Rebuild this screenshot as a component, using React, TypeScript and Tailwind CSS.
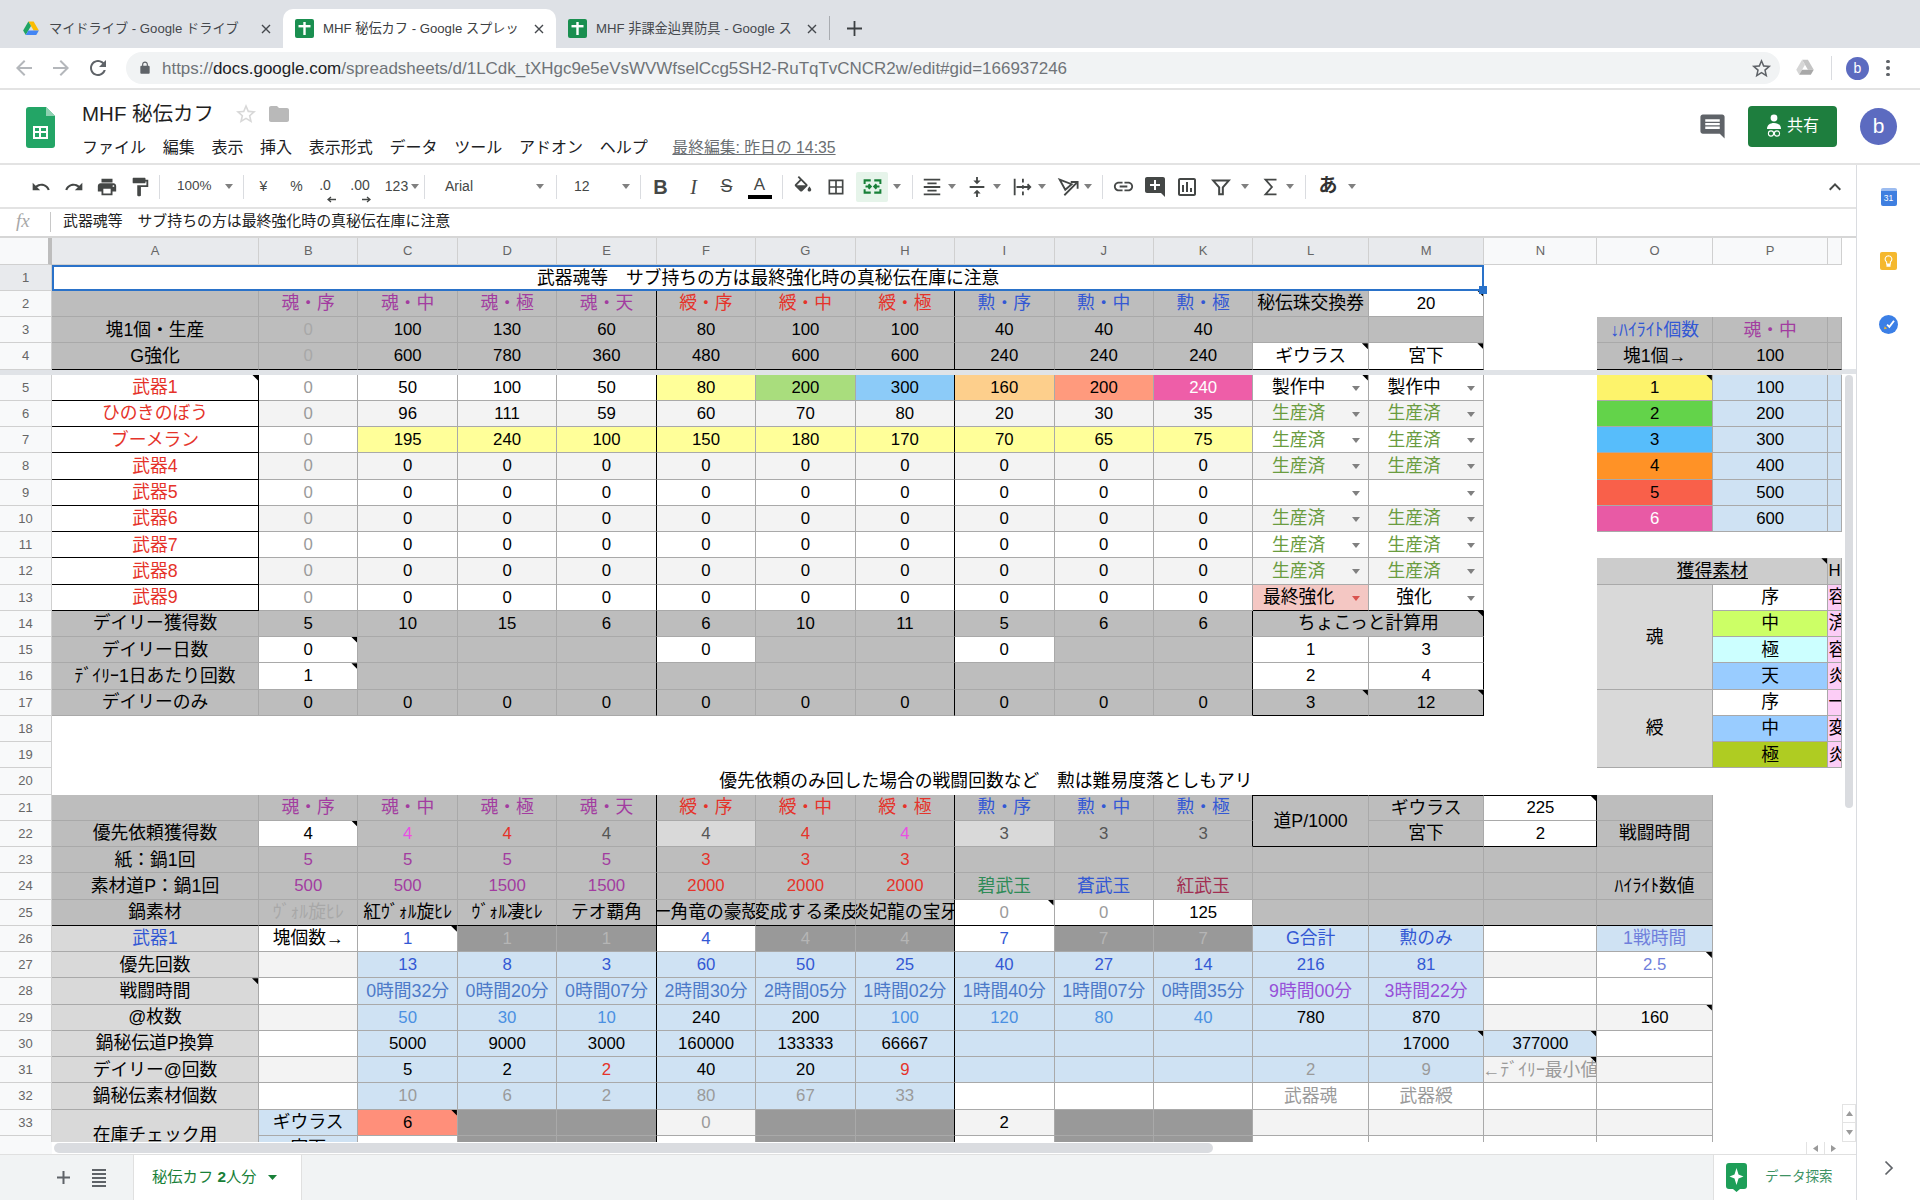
import React from 'react';

type Cd = { t?: string; bg?: string; fg?: string; x?: string; n?: boolean; dd?: boolean; nb?: boolean; l?: boolean; handle?: boolean; ddRed?: boolean };

const W = 'bg-white';
const ALT = 'bg-[#f3f3f3]';
const G = 'bg-[#bdbdbd]';
const LG = 'bg-[#d9d9d9]';
const DG = 'bg-[#999999]';
const LB = 'bg-[#cfe2f3]';
const Y = 'bg-[#ffff99]';
const BL = 'text-black';
const FAINT = 'text-[#a8a8a8]';
const DIM = 'text-[#9a9a9a]';
const RED = 'text-[#e5332a]';
const PUR = 'text-[#a23ca0]';
const BLU = 'text-[#3358d4]';
const MAG = 'text-[#e94fe3]';
const DK = 'text-[#555555]';
const STEEL = 'text-[#4c79c8]';
const SKY = 'text-[#4a90e2]';
const VIO = 'text-[#9650d8]';
const PERI = 'text-[#6f7fdc]';
const GRN = 'text-[#6a9c3f]';
const BB = 'border-b-black';
const BR = 'border-r-black';

const c = (t?: string, bg: string = W, fg: string = BL, x: string = '', o: Partial<Cd> = {}): Cd => ({ t, bg, fg, x, ...o });
const nb: Cd = { bg: W, nb: true };
const blanks = (k: number): Cd[] => Array.from({ length: k }, () => nb);
const list = (a: string[], bg: string, fg: string = BL, x: string = ''): Cd[] => a.map((t) => c(t, bg, fg, x));
const rep = (k: number, bg: string): Cd[] => Array.from({ length: k }, () => c(undefined, bg));
const note = (t: string | undefined, bg: string = W, fg: string = BL, x: string = ''): Cd => c(t, bg, fg, x, { n: true });
const done = (bg: string): Cd => c('生産済', bg, GRN, '', { dd: true });
const ddEmpty: Cd = c(undefined, W, BL, '', { dd: true });

const zeros = (bg: string): Cd[] => list(['0', '0', '0', '0', '0', '0', '0', '0', '0'], bg);
const wpn = (name: string, bg: string, vals?: Cd[]): Cd[] => [
  c(name, W, RED, `${BR} ${BB}`),
  c('0', bg, DIM),
  ...(vals ?? zeros(bg)),
];

const topRows: { n: number; cells: Cd[]; hi?: boolean }[] = [
  {
    n: 1,
    hi: true,
    cells: [
      { t: '武器魂等　サブ持ちの方は最終強化時の真秘伝在庫に注意', bg: W, fg: BL, nb: true, handle: true, x: 'col-span-13 border-2 border-[#2a72c9]' },
      nb, nb, nb, nb,
    ],
  },
  {
    n: 2,
    cells: [
      c(undefined, G),
      ...list(['魂・序', '魂・中', '魂・極', '魂・天'], G, PUR),
      ...list(['綬・序', '綬・中', '綬・極'], G, RED),
      ...list(['勲・序', '勲・中', '勲・極'], G, BLU),
      c('秘伝珠交換券', G),
      note('20'),
      nb, nb, nb, nb,
    ],
  },
  {
    n: 3,
    cells: [
      c('塊1個・生産', G),
      c('0', G, FAINT),
      ...list(['100', '130', '60', '80', '100', '100', '40', '40', '40'], G),
      c(undefined, G),
      c(undefined, G),
      nb,
      c('↓ﾊｲﾗｲﾄ個数', G, BLU),
      c('魂・中', G, PUR),
      c(undefined, G),
    ],
  },
  {
    n: 4,
    cells: [
      c('G強化', G, BL, BB),
      c('0', G, FAINT, BB),
      ...list(['600', '780', '360', '480', '600', '600', '240', '240', '240'], G, BL, BB),
      note('ギウラス', W, BL, BB),
      note('宮下', W, BL, BB),
      nb,
      c('塊1個→', G, BL, BB),
      c('100', G, BL, BB),
      c(undefined, G, BL, BB),
    ],
  },
];

const hl = (t: string, bg: string, p: string, fg: string = BL, n: boolean = false): Cd[] => [
  nb,
  c(t, bg, fg, '', { n }),
  c(p, LB),
  c(undefined, LB),
];
const Q = 'bg-[#fccdf6]';
const qc = (t: string): Cd => c(t, Q, BL, '', { l: true });
const HD = 'bg-[#cccccc]';
const A2 = 'bg-[#d9d9d9]';

const kR = `${BR}`;
const bottomRows: { n: number; cells: Cd[]; start?: number; bars?: boolean }[] = [
  {
    n: 5,
    cells: [
      { ...c('武器1', W, RED, `${BR} ${BB}`), n: true },
      c('0', W, DIM),
      c('50'), c('100'), c('50'),
      c('80', Y),
      c('200', 'bg-[#a9dd7d]'),
      c('300', 'bg-[#8ccbf8]'),
      c('160', 'bg-[#fdcf8c]'),
      c('200', 'bg-[#ff9a7d]'),
      c('240', 'bg-[#ee5ea8]', 'text-white'),
      c('製作中', W, BL, '', { dd: true, n: true }),
      c('製作中', W, BL, '', { dd: true }),
      ...hl('1', 'bg-[#fdf36b]', '100', BL, true),
    ],
  },
  { n: 6, cells: [...wpn('ひのきのぼう', ALT, list(['96', '111', '59', '60', '70', '80', '20', '30', '35'], ALT)), done(ALT), done(ALT), ...hl('2', 'bg-[#63d34a]', '200')] },
  { n: 7, cells: [...[c('ブーメラン', W, RED, `${BR} ${BB}`), c('0', W, DIM)], ...list(['195', '240', '100', '150', '180', '170', '70', '65', '75'], Y), done(W), done(W), ...hl('3', 'bg-[#57bdfb]', '300')] },
  { n: 8, cells: [...wpn('武器4', ALT), done(ALT), done(ALT), ...hl('4', 'bg-[#ff9226]', '400')] },
  { n: 9, cells: [...wpn('武器5', W), ddEmpty, ddEmpty, ...hl('5', 'bg-[#f9604a]', '500')] },
  { n: 10, cells: [...wpn('武器6', ALT), done(ALT), done(ALT), ...hl('6', 'bg-[#e85aa5]', '600', 'text-white')] },
  { n: 11, cells: [...wpn('武器7', W), done(W), done(W), ...blanks(4)] },
  {
    n: 12,
    cells: [
      ...wpn('武器8', ALT), done(ALT), done(ALT), nb,
      note('獲得素材', HD, `${BL} underline`, 'col-span-2'),
      c('HC', HD, BL, '', { l: true }),
    ],
  },
  {
    n: 13,
    cells: [
      ...wpn('武器9', W),
      c('最終強化', 'bg-[#f4c7c3]', BL, BB, { dd: true, ddRed: true }),
      c('強化', W, BL, BB, { dd: true }),
      nb,
      c('魂', A2, BL, 'row-span-4'),
      c('序'),
      qc('容'),
    ],
  },
  {
    n: 14,
    cells: [
      c('デイリー獲得数', G),
      ...list(['5', '10', '15', '6', '6', '10', '11', '5', '6'], G),
      c('6', G, BL, kR),
      note('ちょこっと計算用', G, BL, `col-span-2 ${BR}`),
      nb,
      c('中', 'bg-[#ccff66]'),
      qc('済'),
    ],
  },
  {
    n: 15,
    cells: [
      c('デイリー日数', G),
      note('0'),
      ...rep(3, G), c('0'), ...rep(2, G), c('0'), c(undefined, G), c(undefined, G, BL, kR),
      c('1'), c('3', W, BL, BR),
      nb,
      c('極', 'bg-[#ccffff]'),
      qc('容'),
    ],
  },
  {
    n: 16,
    cells: [
      c('ﾃﾞｲﾘｰ1日あたり回数', G),
      note('1'),
      ...rep(8, G), c(undefined, G, BL, kR),
      c('2'), c('4', W, BL, BR),
      nb,
      c('天', 'bg-[#99ccff]'),
      qc('炎'),
    ],
  },
  {
    n: 17,
    cells: [
      c('デイリーのみ', G),
      ...list(['0', '0', '0', '0', '0', '0', '0', '0', '0'], G),
      c('0', G, BL, kR),
      note('3', G, BL, BB),
      note('12', G, BL, `${BB} ${BR}`),
      nb,
      c('綬', A2, BL, 'row-span-3'),
      c('序'),
      qc('一'),
    ],
  },
  { n: 18, bars: false, cells: [...blanks(14), c('中', 'bg-[#99ccff]'), qc('変')] },
  { n: 19, bars: false, cells: [...blanks(14), c('極', 'bg-[#afcc22]'), qc('炎')] },
  {
    n: 20,
    bars: false,
    cells: [nb, { t: '優先依頼のみ回した場合の戦闘回数など　勲は難易度落としもアリ', bg: W, fg: BL, nb: true, x: 'col-span-14' }, nb, nb],
  },
  {
    n: 21,
    cells: [
      c(undefined, G),
      ...list(['魂・序', '魂・中', '魂・極', '魂・天'], G, PUR),
      ...list(['綬・序', '綬・中', '綬・極'], G, RED),
      c('勲・序', G, BLU), c('勲・中', G, BLU), c('勲・極', G, BLU, kR),
      c('道P/1000', G, BL, `row-span-2 border-t border-t-black ${BB}`),
      c('ギウラス', G, BL, 'border-t border-t-black'),
      note('225', W, BL, `border-t border-t-black ${BR}`),
      c(undefined, G),
      nb, nb,
    ],
  },
  {
    n: 22,
    cells: [
      c('優先依頼獲得数', G),
      note('4'),
      c('4', G, MAG), c('4', G, RED), c('4', G, DK),
      c('4', LG, DK), c('4', G, RED), c('4', G, MAG),
      c('3', LG, DK), c('3', G, DK), c('3', G, DK, kR),
      c('宮下', G, BL, BB),
      c('2', W, BL, `${BB} ${BR}`),
      c('戦闘時間', G),
      nb, nb,
    ],
  },
  {
    n: 23,
    cells: [
      c('紙：鍋1回', G),
      ...list(['5', '5', '5', '5'], G, PUR),
      ...list(['3', '3', '3'], G, RED),
      ...rep(7, G),
      nb, nb,
    ],
  },
  {
    n: 24,
    cells: [
      c('素材道P：鍋1回', G),
      ...list(['500', '500', '1500', '1500'], G, PUR),
      ...list(['2000', '2000', '2000'], G, RED),
      c('碧武玉', G, 'text-[#2e8b57]'),
      c('蒼武玉', G, BLU),
      c('紅武玉', G, 'text-[#a12f52]'),
      ...rep(3, G),
      c('ﾊｲﾗｲﾄ数値', G),
      nb, nb,
    ],
  },
  {
    n: 25,
    cells: [
      c('鍋素材', G, BL, BB),
      c('ｳﾞｫﾙ旋ﾋﾚ', G, FAINT, BB),
      c('紅ｳﾞｫﾙ旋ﾋﾚ', G, BL, BB),
      c('ｳﾞｫﾙ凄ﾋﾚ', G, BL, BB),
      c('テオ覇角', G, BL, BB),
      c('一角竜の豪殻', G, BL, BB),
      c('変成する柔皮', G, BL, BB),
      c('炎妃龍の宝牙', G, BL, BB),
      note('0', W, DIM, BB),
      c('0', W, DIM, BB),
      c('125', W, BL, BB),
      c(undefined, G, BL, BB),
      c(undefined, G, BL, BB),
      c(undefined, G, BL, BB),
      c(undefined, G, BL, BB),
      nb, nb,
    ],
  },
  {
    n: 26,
    cells: [
      c('武器1', LG, BLU),
      c('塊個数→'),
      note('1', W, BLU),
      c('1', DG, 'text-[#b5b5b5]'), c('1', DG, 'text-[#b5b5b5]'),
      c('4', W, BLU),
      c('4', DG, 'text-[#b5b5b5]'), c('4', DG, 'text-[#b5b5b5]'),
      c('7', W, BLU),
      c('7', DG, 'text-[#b5b5b5]'), c('7', DG, 'text-[#b5b5b5]'),
      c('G合計', LB, BLU),
      c('勲のみ', LB, BLU),
      c(undefined, W),
      c('1戦時間', LB, PERI),
      nb, nb,
    ],
  },
  {
    n: 27,
    cells: [
      c('優先回数', LG),
      c(undefined, ALT),
      ...list(['13', '8', '3', '60', '50', '25', '40', '27', '14', '216', '81'], LB, BLU),
      c(undefined, ALT),
      note('2.5', W, PERI),
      nb, nb,
    ],
  },
  {
    n: 28,
    cells: [
      note('戦闘時間', LG),
      c(undefined, W),
      ...list(['0時間32分', '0時間20分', '0時間07分', '2時間30分', '2時間05分', '1時間02分', '1時間40分', '1時間07分', '0時間35分'], LB, STEEL),
      c('9時間00分', LB, VIO),
      c('3時間22分', LB, VIO),
      c(undefined, W),
      c(undefined, W),
      nb, nb,
    ],
  },
  {
    n: 29,
    cells: [
      c('@枚数', LG),
      c(undefined, ALT),
      ...list(['50', '30', '10'], LB, SKY),
      c('240', LB), c('200', LB),
      ...list(['100', '120', '80', '40'], LB, SKY),
      c('780', LB), c('870', LB),
      c(undefined, ALT),
      note('160', ALT),
      nb, nb,
    ],
  },
  {
    n: 30,
    cells: [
      c('鍋秘伝道P換算', LG),
      c(undefined, W),
      ...list(['5000', '9000', '3000', '160000', '133333', '66667'], LB),
      ...rep(4, LB),
      note('17000', LB),
      note('377000', LB),
      c(undefined, W),
      nb, nb,
    ],
  },
  {
    n: 31,
    cells: [
      c('デイリー@回数', LG),
      c(undefined, ALT),
      c('5', LB), c('2', LB), c('2', LB, RED), c('40', LB), c('20', LB), c('9', LB, RED),
      ...rep(3, LB),
      c('2', LB, DIM), c('9', LB, DIM),
      note('←ﾃﾞｲﾘｰ最小値', ALT, DIM),
      c(undefined, ALT),
      nb, nb,
    ],
  },
  {
    n: 32,
    cells: [
      c('鍋秘伝素材個数', LG),
      c(undefined, W),
      ...list(['10', '6', '2', '80', '67', '33'], LB, DIM),
      ...rep(3, W),
      c('武器魂', W, DIM), c('武器綬', W, DIM),
      c(undefined, W), c(undefined, W),
      nb, nb,
    ],
  },
  {
    n: 33,
    cells: [
      c('在庫チェック用', LG, BL, 'row-span-2'),
      c('ギウラス', LB),
      note('6', 'bg-[#ff8f7a]'),
      ...rep(2, DG),
      c('0', ALT, DIM),
      ...rep(2, DG),
      c('2', ALT),
      ...rep(2, DG),
      ...rep(4, ALT),
      nb, nb,
    ],
  },
  {
    n: 34,
    start: 1,
    cells: [
      c('宮下', LB),
      c(undefined, W),
      ...rep(2, DG),
      c(undefined, W),
      ...rep(2, DG),
      c(undefined, W),
      ...rep(2, DG),
      ...rep(4, W),
      nb, nb,
    ],
  },
];

function Caret({ red }: { red?: boolean }) {
  return (
    <svg width="8" height="5" viewBox="0 0 8 5" className="block flex-none">
      <path d="M0 0h8L4 5z" fill={red ? '#d9534f' : '#808080'} />
    </svg>
  );
}

const hasWide = (s?: string) => !!s && /[^\x00-\x7f]/.test(s);

function Cell({ d }: { d: Cd }) {
  const cls = `relative min-w-0 min-h-0 ${d.bg ?? ''} ${d.fg ?? ''} ${d.nb ? '' : 'border-r border-b border-[#a9a9a9]'} ${d.x ?? ''}`;
  return (
    <div className={cls}>
      <div className={`flex h-full w-full items-center overflow-hidden whitespace-nowrap pt-[2px] ${hasWide(d.t) ? 'text-[17.8px]' : 'text-[16.8px]'} ${d.l ? 'justify-start' : 'justify-center'} ${d.dd ? 'pr-[24px]' : ''}`}>
        {d.t}
      </div>
      {d.dd && (
        <span className="absolute right-[8px] top-[11px]">
          <Caret red={d.ddRed} />
        </span>
      )}
      {d.n && <span className="absolute right-0 top-0 h-[6px] w-[6px] bg-black [clip-path:polygon(0_0,100%_0,100%_100%)]" />}
      {d.handle && <span className="absolute -bottom-[5px] -right-[5px] z-10 h-[8px] w-[8px] bg-[#2a72c9]" />}
    </div>
  );
}

function RowHead({ n, hi }: { n: number; hi?: boolean }) {
  return (
    <div className={`flex items-center justify-center border-r border-b border-[#d0d0d0] text-[13px] text-[#666666] ${hi ? 'bg-[#e8eaed]' : 'bg-[#f8f9fa]'}`}>{n}</div>
  );
}

function Rows({ rows }: { rows: { n: number; cells: Cd[]; start?: number; bars?: boolean; hi?: boolean }[] }) {
  return (
    <>
      {rows.map((r) => (
        <React.Fragment key={r.n}>
          <RowHead n={r.n} hi={r.hi} />
          {r.cells.map((d, i) => {
            const col = i + (r.start ?? 0);
            const bar = r.bars !== false && r.n !== 1 && (col === 4 || col === 7);
            const dd = bar ? { ...d, x: `${d.x ?? ''} ${BR}` } : d;
            return <Cell key={i} d={dd} />;
          })}
        </React.Fragment>
      ))}
    </>
  );
}

const COLS = 'grid-cols-[52px_207px_repeat(10,99.45px)_115.5px_115.5px_113px_115.5px_115.5px_13.5px]';

function Ic({ d, s = 20, f = '#444746', cls = '' }: { d: string; s?: number; f?: string; cls?: string }) {
  return (
    <svg width={s} height={s} viewBox="0 0 24 24" className={`block ${cls}`}>
      <path d={d} fill={f} />
    </svg>
  );
}

function St({ d, s = 22, sw = 2, col = '#444746', fill = 'none' }: { d: string; s?: number; sw?: number; col?: string; fill?: string }) {
  return (
    <svg width={s} height={s} viewBox="0 0 24 24" className="block">
      <path d={d} fill={fill} stroke={col} strokeWidth={sw} />
    </svg>
  );
}

function TB({ cls, children }: { cls: string; children?: React.ReactNode }) {
  return <div className={`flex h-full flex-none items-center ${cls}`}>{children}</div>;
}
function Sep({ cls }: { cls: string }) {
  return <div className={`h-[24px] w-px flex-none bg-[#dadce0] ${cls}`} />;
}

function DriveLogo({ s = 20, gray }: { s?: number; gray?: boolean }) {
  return (
    <svg width={s} height={s} viewBox="0 0 24 24" className="block flex-none">
      <path d="M8.5 2h7l7 12h-7z" fill={gray ? '#c4c4c4' : '#fbbc04'} />
      <path d="M8.5 2L1.5 14l3.5 6 7-12z" fill={gray ? '#d6d6d6' : '#1fa463'} />
      <path d="M5 20h14l3.5-6h-14z" fill={gray ? '#a8a8a8' : '#4285f4'} />
    </svg>
  );
}

function SheetFav() {
  return (
    <svg width="19" height="19" viewBox="0 0 19 19" className="block flex-none">
      <rect x="0" y="0" width="19" height="19" rx="2" fill="#1a8f50" />
      <rect x="3.5" y="6" width="12" height="2.4" fill="#fff" />
      <rect x="8.3" y="3" width="2.4" height="13" fill="#fff" />
    </svg>
  );
}

function Tab({ label, icon, active, text }: { label: string; icon: React.ReactNode; active?: boolean; text: string }) {
  return (
    <div className={`flex h-[39px] w-[273px] flex-none items-center pl-[12px] pr-[12px] ${active ? 'rounded-t-[10px] bg-white' : ''}`}>
      {icon}
      <span className={`ml-[9px] flex-1 overflow-hidden whitespace-nowrap text-[13.2px] ${text}`}>{label}</span>
      <svg width="10" height="10" viewBox="0 0 10 10" className="ml-[8px] block flex-none">
        <path d="M1 1l8 8M9 1l-8 8" stroke="#45484d" strokeWidth="1.4" />
      </svg>
    </div>
  );
}

const P = {
  back: 'M20 11H7.83l5.59-5.59L12 4l-8 8 8 8 1.41-1.41L7.83 13H20v-2z',
  fwd: 'M12 4l-1.41 1.41L16.17 11H4v2h12.17l-5.58 5.59L12 20l8-8z',
  reload: 'M17.65 6.35C16.2 4.9 14.21 4 12 4c-4.42 0-7.99 3.58-7.99 8s3.57 8 7.99 8c3.73 0 6.84-2.55 7.73-6h-2.08c-.82 2.33-3.04 4-5.65 4-3.31 0-6-2.69-6-6s2.69-6 6-6c1.66 0 3.14.69 4.22 1.78L13 11h7V4l-2.35 2.35z',
  lock: 'M18 8h-1V6c0-2.76-2.24-5-5-5S7 3.24 7 6v2H6c-1.1 0-2 .9-2 2v10c0 1.1.9 2 2 2h12c1.1 0 2-.9 2-2V10c0-1.1-.9-2-2-2zM9 8V6c0-1.66 1.34-3 3-3s3 1.34 3 3v2H9z',
  star: 'M22 9.24l-7.19-.62L12 2 9.19 8.63 2 9.24l5.46 4.73L5.82 21 12 17.27 18.18 21l-1.63-7.03L22 9.24zM12 15.4l-3.76 2.27 1-4.28-3.32-2.88 4.38-.38L12 6.1l1.71 4.04 4.38.38-3.32 2.88 1 4.28L12 15.4z',
  folder: 'M10 4H4c-1.1 0-2 .9-2 2v12c0 1.1.9 2 2 2h16c1.1 0 2-.9 2-2V8c0-1.1-.9-2-2-2h-8l-2-2z',
  comment: 'M20 2H4c-1.1 0-2 .9-2 2v12c0 1.1.9 2 2 2h14l4 4V4c0-1.1-.9-2-2-2zm-2 12H6v-2h12v2zm0-3H6V9h12v2zm0-3H6V6h12v2z',
  undo: 'M12.5 8c-2.65 0-5.05.99-6.9 2.6L2 7v9h9l-3.62-3.62c1.39-1.16 3.16-1.88 5.12-1.88 3.54 0 6.55 2.31 7.6 5.5l2.37-.78C21.08 11.03 17.15 8 12.5 8z',
  redo: 'M18.4 10.6C16.55 8.99 14.15 8 11.5 8c-4.65 0-8.58 3.03-9.96 7.22L3.9 16c1.05-3.19 4.05-5.5 7.6-5.5 1.95 0 3.73.72 5.12 1.88L13 16h9V7l-3.6 3.6z',
  print: 'M19 8H5c-1.66 0-3 1.34-3 3v6h4v4h12v-4h4v-6c0-1.66-1.34-3-3-3zm-3 11H8v-5h8v5zm3-7c-.55 0-1-.45-1-1s.45-1 1-1 1 .45 1 1-.45 1-1 1zm-1-9H6v4h12V3z',
  paint: 'M18 4V3c0-.55-.45-1-1-1H5c-.55 0-1 .45-1 1v4c0 .55.45 1 1 1h12c.55 0 1-.45 1-1V6h1v4H9v11c0 .55.45 1 1 1h2c.55 0 1-.45 1-1v-9h8V4h-3z',
  fill: 'M16.56 8.94L7.62 0 6.21 1.41l2.38 2.38-5.15 5.15c-.59.59-.59 1.54 0 2.12l5.5 5.5c.29.29.68.44 1.06.44s.77-.15 1.06-.44l5.5-5.5c.59-.58.59-1.53 0-2.12zM5.21 10L10 5.21 14.79 10H5.21zM19 11.5s-2 2.17-2 3.5c0 1.1.9 2 2 2s2-.9 2-2c0-1.33-2-3.5-2-3.5z',
  borders: 'M3 3v18h18V3H3zm8 16H5v-6h6v6zm0-8H5V5h6v6zm8 8h-6v-6h6v6zm0-8h-6V5h6v6z',
  align: 'M3 21h18v-2H3v2zm4-4h10v-2H7v2zM3 13h18v-2H3v2zm4-6v2h10V7H7zM3 3v2h18V3H3z',
  valign: 'M8 19h3v4h2v-4h3l-4-4-4 4zm8-14h-3V1h-2v4H8l4 4 4-4zM4 11v2h16v-2H4z',
  link: 'M3.9 12c0-1.71 1.39-3.1 3.1-3.1h4V7H7c-2.76 0-5 2.24-5 5s2.24 5 5 5h4v-1.9H7c-1.71 0-3.1-1.39-3.1-3.1zM8 13h8v-2H8v2zm9-6h-4v1.9h4c1.71 0 3.1 1.39 3.1 3.1s-1.39 3.1-3.1 3.1h-4V17h4c2.76 0 5-2.24 5-5s-2.24-5-5-5z',
  addc: 'M20 2H4c-1.1 0-2 .9-2 2v12c0 1.1.9 2 2 2h14l4 4V4c0-1.1-.9-2-2-2zm-3 9h-4v4h-2v-4H7V9h4V5h2v4h4v2z',
  chart: 'M9 17H7v-7h2v7zm4 0h-2V7h2v10zm4 0h-2v-4h2v4zm2 2H5V5h14v14zm0-16H5c-1.1 0-2 .9-2 2v14c0 1.1.9 2 2 2h14c1.1 0 2-.9 2-2V5c0-1.1-.9-2-2-2z',
  up: 'M7.41 15.41L12 10.83l4.59 4.58L18 14l-6-6-6 6z',
};

function TinyArrow({ right, cls }: { right?: boolean; cls: string }) {
  return (
    <svg width="9" height="7" viewBox="0 0 9 7" className={`absolute block ${cls}`}>
      <path d={right ? 'M0 3.5h8M5 1l3 2.5L5 6' : 'M9 3.5H1M4 1L1 3.5 4 6'} stroke="#444746" strokeWidth="1.3" fill="none" />
    </svg>
  );
}

export default function App() {
  return (
    <div className="flex h-[1200px] w-[1920px] flex-col overflow-hidden bg-white text-black [font-family:'Liberation_Sans','Noto_Sans_CJK_JP',sans-serif]">
      {/* Browser tabs */}
      <div className="flex h-[48px] flex-none items-end bg-[#dee1e6] pl-[10px]">
        <Tab label="マイドライブ - Google ドライブ" text="text-[#45484d]" icon={<DriveLogo s={18} />} />
        <Tab active label="MHF 秘伝カフ - Google スプレッ" text="text-[#3c4043]" icon={<SheetFav />} />
        <Tab label="MHF 非課金辿異防具 - Google ス" text="text-[#45484d]" icon={<SheetFav />} />
        <div className="mb-[8px] h-[24px] w-px flex-none bg-[#a9acb1]" />
        <div className="flex h-[39px] w-[48px] flex-none items-center justify-center">
          <svg width="15" height="15" viewBox="0 0 15 15" className="block">
            <path d="M7.5 0v15M0 7.5h15" stroke="#3c4043" strokeWidth="1.8" />
          </svg>
        </div>
      </div>

      {/* Address bar */}
      <div className="flex h-[42px] flex-none items-center border-b-2 border-[#e3e3e3] bg-white pl-[12px]">
        <Ic d={P.back} s={24} f="#b4b7bb" />
        <div className="w-[13px]" />
        <Ic d={P.fwd} s={24} f="#b4b7bb" />
        <div className="w-[13px]" />
        <Ic d={P.reload} s={24} f="#5f6368" />
        <div className="ml-[16px] flex h-[32px] w-[1654px] flex-none items-center rounded-full bg-[#f1f3f4] pl-[12px]">
          <Ic d={P.lock} s={14} f="#5f6368" />
          <span className="ml-[10px] whitespace-nowrap pt-[2px] text-[16.98px] text-[#6f7378]">
            https://<span className="text-[#202124]">docs.google.com</span>/spreadsheets/d/1LCdk_tXHgc9e5eVsWVWfselCcg5SH2-RuTqTvCNCR2w/edit#gid=166937246
          </span>
          <div className="ml-auto mr-[7px]">
            <Ic d={P.star} s={23} f="#5f6368" />
          </div>
        </div>
        <div className="ml-[15px]">
          <DriveLogo s={20} gray />
        </div>
        <div className="ml-[16px] h-[24px] w-px bg-[#dadce0]" />
        <div className="ml-[14px] flex h-[23px] w-[23px] items-center justify-center rounded-full bg-[#5c6bc0] text-[14px] text-white">b</div>
        <div className="ml-[17px] flex flex-col gap-[3px]">
          <span className="h-[3.5px] w-[3.5px] rounded-full bg-[#5f6368]" />
          <span className="h-[3.5px] w-[3.5px] rounded-full bg-[#5f6368]" />
          <span className="h-[3.5px] w-[3.5px] rounded-full bg-[#5f6368]" />
        </div>
      </div>

      {/* Docs header */}
      <div className="flex h-[75px] flex-none items-stretch border-b-2 border-[#e3e3e3] bg-white">
        <div className="ml-[26px] mt-[17px] flex-none">
          <svg width="29" height="41" viewBox="0 0 29 41" className="block">
            <path d="M3 0h17l9 9v29a3 3 0 0 1-3 3H3a3 3 0 0 1-3-3V3a3 3 0 0 1 3-3z" fill="#23a566" />
            <path d="M20 0l9 9h-9z" fill="#8ed1b1" />
            <path d="M7 19h15v13H7zM9 21v3h4v-3zm6 0v3h5v-3zM9 26v4h4v-4zm6 0v4h5v-4z" fill="#fff" fillRule="evenodd" />
          </svg>
        </div>
        <div className="ml-[27px] flex flex-col">
          <div className="mt-[12px] flex h-[24px] items-center">
            <span className="w-[152px] whitespace-nowrap text-[20.5px] text-[#1f1f1f]">MHF 秘伝カフ</span>
            <Ic d={P.star} s={24} f="#d8d8d8" />
            <div className="w-[9px]" />
            <Ic d={P.folder} s={24} f="#b9b9b9" />
          </div>
          <div className="mt-[10px] flex h-[24px] items-center gap-[16.7px] whitespace-nowrap text-[16px] text-[#202124]">
            <span>ファイル</span>
            <span>編集</span>
            <span>表示</span>
            <span>挿入</span>
            <span>表示形式</span>
            <span>データ</span>
            <span>ツール</span>
            <span>アドオン</span>
            <span>ヘルプ</span>
            <span className="ml-[8px] text-[15.8px] text-[#6b6f73] underline">最終編集: 昨日の 14:35</span>
          </div>
        </div>
        <div className="ml-auto flex items-center pb-[1px]">
          <Ic d={P.comment} s={29} f="#5f6368" />
          <div className="ml-[21px] flex h-[41px] w-[89px] items-center justify-center gap-[5px] rounded-[4px] bg-[#1e7e3e] text-[16px] text-white">
            <svg width="16" height="24" viewBox="0 0 16 24" className="block">
              <circle cx="8" cy="4" r="3.4" fill="#fff" />
              <path d="M1 15c0-4 3-6 7-6s7 2 7 6z" fill="#fff" />
              <circle cx="5" cy="19.5" r="2.6" fill="none" stroke="#fff" strokeWidth="1.1" />
              <circle cx="11" cy="19.5" r="2.6" fill="none" stroke="#fff" strokeWidth="1.1" />
            </svg>
            共有
          </div>
          <div className="ml-[23px] mr-[23px] flex h-[37px] w-[37px] items-center justify-center rounded-full bg-[#5c6bc0] text-[21px] text-white">b</div>
        </div>
      </div>

      <div className="flex min-h-0 flex-1">
        {/* Main column */}
        <div className="flex w-[1856px] flex-none flex-col">
          {/* Toolbar */}
          <div className="flex h-[44px] flex-none items-center border-b-2 border-[#e3e3e3] pl-[24px] pt-[1px] text-[14px] text-[#444746]">
            <TB cls="w-[33px] justify-center"><Ic d={P.undo} /></TB>
            <TB cls="w-[33px] justify-center"><Ic d={P.redo} /></TB>
            <TB cls="w-[33px] justify-center"><Ic d={P.print} s={22} /></TB>
            <TB cls="w-[33px] justify-center"><Ic d={P.paint} s={22} /></TB>
            <Sep cls="ml-[3px] mr-[3px]" />
            <TB cls="w-[77px] justify-between pl-[14px] pr-[7px] text-[13.5px]"><span>100%</span><Caret /></TB>
            <Sep cls="ml-[3px] mr-[3px]" />
            <TB cls="w-[33px] justify-center">¥</TB>
            <TB cls="w-[33px] justify-center">%</TB>
            <TB cls="w-[24px] justify-center">
              <span className="relative -top-[1px]">
                .0
                <TinyArrow cls="-bottom-[7px] left-[8px]" />
              </span>
            </TB>
            <TB cls="w-[46px] justify-center">
              <span className="relative -top-[1px]">
                .00
                <TinyArrow right cls="-bottom-[7px] left-[12px]" />
              </span>
            </TB>
            <TB cls="w-[38px] justify-center gap-[3px]"><span>123</span><Caret /></TB>
            <Sep cls="ml-[3px] mr-[3px]" />
            <TB cls="w-[125px] justify-between pl-[17px] pr-[9px]"><span>Arial</span><Caret /></TB>
            <Sep cls="ml-[3px] mr-[3px]" />
            <TB cls="w-[77px] justify-between pl-[14px] pr-[7px]"><span>12</span><Caret /></TB>
            <Sep cls="ml-[3px] mr-[3px]" />
            <TB cls="w-[33px] justify-center text-[20px] font-bold">B</TB>
            <TB cls="w-[33px] justify-center text-[20px] italic [font-family:'Liberation_Serif',serif]">I</TB>
            <TB cls="w-[33px] justify-center"><span className="text-[18px] line-through">S</span></TB>
            <TB cls="w-[33px] flex-col justify-center">
              <span className="text-[17px] leading-[20px]">A</span>
              <span className="h-[4px] w-[24px] bg-black" />
            </TB>
            <Sep cls="ml-[6px] mr-[3px]" />
            <TB cls="w-[33px] justify-center"><Ic d={P.fill} s={22} /></TB>
            <TB cls="w-[33px] justify-center"><Ic d={P.borders} /></TB>
            <TB cls="ml-[4px] w-[32px] justify-center">
              <div className="flex h-[30px] w-[32px] items-center justify-center rounded-[2px] bg-[#e6f4ea]">
                <St s={21} sw={2.3} col="#188038" d="M3 9V5h7M14 5h7v4M3 15v4h7M14 19h7v-4M4 12h6M7.5 9.5L10 12l-2.5 2.5M20 12h-6M16.5 9.5L14 12l2.5 2.5" />
              </div>
            </TB>
            <TB cls="w-[18px] justify-center"><Caret /></TB>
            <Sep cls="ml-[6px] mr-[3px]" />
            <TB cls="w-[32px] justify-center"><Ic d={P.align} s={22} /></TB>
            <TB cls="w-[8px] justify-center"><Caret /></TB>
            <TB cls="ml-[5px] w-[32px] justify-center"><Ic d={P.valign} s={22} /></TB>
            <TB cls="w-[8px] justify-center"><Caret /></TB>
            <TB cls="ml-[5px] w-[32px] justify-center">
              <St s={22} sw={2} d="M4 3v18M13 3v4M13 10v4M13 17v4M6 12h15M18 9l3 3-3 3" />
            </TB>
            <TB cls="w-[8px] justify-center"><Caret /></TB>
            <TB cls="ml-[6px] w-[32px] justify-center">
              <St s={22} sw={2} d="M3 4l13 5-7 6zM8 21L22 7M15 6.5h7.5V14" />
            </TB>
            <TB cls="w-[8px] justify-center"><Caret /></TB>
            <Sep cls="ml-[10px] mr-[4px]" />
            <TB cls="w-[32px] justify-center"><Ic d={P.link} s={23} /></TB>
            <TB cls="w-[32px] justify-center"><Ic d={P.addc} s={24} /></TB>
            <TB cls="w-[32px] justify-center"><Ic d={P.chart} s={24} /></TB>
            <TB cls="ml-[2px] w-[32px] justify-center">
              <St s={22} sw={2.2} d="M3.5 5h17L14 12.5V20h-4v-7.5z" />
            </TB>
            <TB cls="ml-[4px] w-[8px] justify-center"><Caret /></TB>
            <TB cls="ml-[6px] w-[32px] justify-center">
              <St s={22} sw={2} d="M18 4H6l7 8-7 8h12" />
            </TB>
            <TB cls="w-[6px] justify-center"><Caret /></TB>
            <Sep cls="ml-[12px] mr-[6px]" />
            <TB cls="w-[32px] justify-center text-[19px] font-bold text-[#333333]">あ</TB>
            <TB cls="ml-[4px] w-[8px] justify-center"><Caret /></TB>
            <div className="ml-auto mr-[9px]">
              <Ic d={P.up} s={24} f="#444746" />
            </div>
          </div>

          {/* Formula bar */}
          <div className="flex h-[29px] flex-none items-center border-b-2 border-[#d6d6d6] pb-[2px]">
            <span className="ml-[16px] w-[34px] text-[19px] italic text-[#a8a8a8] [font-family:'Liberation_Serif',serif]">fx</span>
            <div className="h-[20px] w-px bg-[#c8c8c8]" />
            <span className="ml-[12px] whitespace-nowrap text-[14.9px] text-[#222222]">武器魂等　サブ持ちの方は最終強化時の真秘伝在庫に注意</span>
          </div>

          {/* Sheet area */}
          <div className="flex min-h-0 flex-1">
            <div className="min-h-0 w-[1842px] flex-none overflow-hidden leading-none">
              <div className={`grid ${COLS} grid-rows-[26.5px_repeat(4,26.25px)]`}>
                <div className="border-r-[4px] border-b border-r-[#bdbdbd] border-b-[#d0d0d0] bg-[#f8f9fa]" />
                {['A', 'B', 'C', 'D', 'E', 'F', 'G', 'H', 'I', 'J', 'K', 'L', 'M', 'N', 'O', 'P', ''].map((h, i) => (
                  <div
                    key={i}
                    className={`flex items-center justify-center border-r border-b border-[#d0d0d0] text-[13px] text-[#666666] ${i < 13 ? 'bg-[#e8eaed]' : 'bg-[#f8f9fa]'}`}
                  >
                    {h}
                  </div>
                ))}
                <Rows rows={topRows} />
              </div>
              <div className="h-[5px] bg-[#e0e3e7]" />
              <div className={`grid ${COLS} auto-rows-[26.25px]`}>
                <Rows rows={bottomRows} />
              </div>
            </div>
            {/* Vertical scrollbar */}
            <div className="flex w-[14px] flex-none flex-col">
              <div className="h-[131px] flex-none border-b border-transparent" />
              <div className="h-[5px] flex-none bg-[#e0e3e7]" />
              <div className="mx-[3px] mt-[1px] h-[433px] flex-none rounded-[5px] bg-[#dadce0]" />
              <div className="flex-1" />
              <div className="flex h-[19px] flex-none items-center justify-center border border-[#e3e3e3] text-[#9a9a9a]">
                <svg width="7" height="5" viewBox="0 0 7 5" className="block"><path d="M0 5h7L3.5 0z" fill="#9a9a9a" /></svg>
              </div>
              <div className="flex h-[19px] flex-none items-center justify-center border border-t-0 border-[#e3e3e3]">
                <svg width="7" height="5" viewBox="0 0 7 5" className="block"><path d="M0 0h7L3.5 5z" fill="#9a9a9a" /></svg>
              </div>
            </div>
          </div>

          {/* Horizontal scrollbar */}
          <div className="flex h-[12px] flex-none items-center">
            <div className="w-[52px] flex-none self-stretch bg-[#f8f9fa]" />
            <div className="ml-[2px] h-[10px] w-[1159px] flex-none rounded-[5px] bg-[#dadce0]" />
            <div className="ml-auto mr-[14px] flex h-full">
              <div className="flex w-[18px] items-center justify-center border-l border-[#e3e3e3]">
                <svg width="5" height="7" viewBox="0 0 5 7" className="block"><path d="M5 0v7L0 3.5z" fill="#9a9a9a" /></svg>
              </div>
              <div className="flex w-[18px] items-center justify-center border-l border-[#e3e3e3]">
                <svg width="5" height="7" viewBox="0 0 5 7" className="block"><path d="M0 0v7l5-3.5z" fill="#9a9a9a" /></svg>
              </div>
            </div>
          </div>

          {/* Sheet tabs */}
          <div className="flex h-[46px] flex-none items-stretch border-t border-[#e0e0e0] bg-[#f1f3f4]">
            <div className="flex w-[133px] flex-none items-center pl-[56px]">
              <svg width="15" height="15" viewBox="0 0 15 15" className="block">
                <path d="M7.5 1v13M1 7.5h13" stroke="#5f6368" strokeWidth="2" />
              </svg>
              <div className="ml-[21px] flex flex-col gap-[2px]">
                <span className="h-[2px] w-[14px] bg-[#5f6368]" />
                <span className="h-[2px] w-[14px] bg-[#5f6368]" />
                <span className="h-[2px] w-[14px] bg-[#5f6368]" />
                <span className="h-[2px] w-[14px] bg-[#5f6368]" />
                <span className="h-[2px] w-[14px] bg-[#5f6368]" />
              </div>
            </div>
            <div className="flex w-[169px] flex-none items-center border-x border-[#e0e0e0] bg-white pl-[18px] text-[15.3px] text-[#188038]">
              <span className="whitespace-nowrap">秘伝カフ <b>2</b>人分</span>
              <svg width="9" height="5" viewBox="0 0 9 5" className="ml-[11px] block"><path d="M0 0h9L4.5 5z" fill="#188038" /></svg>
            </div>
            <div className="ml-auto flex w-[143px] flex-none items-center border-l border-[#e0e0e0] bg-white pl-[12px]">
              <svg width="21" height="29" viewBox="0 0 21 29" className="block flex-none">
                <path d="M3 0h15a3 3 0 0 1 3 3v20a3 3 0 0 1-3 3h-4l-3.5 3L7 26H3a3 3 0 0 1-3-3V3a3 3 0 0 1 3-3z" fill="#1e9e58" />
                <path d="M10.5 5l2 6.5 5 2-5 2-2 6.5-2-6.5-5-2 5-2z" fill="#fff" />
              </svg>
              <span className="ml-[18px] whitespace-nowrap text-[13.5px] text-[#3d9263]">データ探索</span>
            </div>
          </div>
        </div>

        {/* Side panel */}
        <div className="flex min-w-0 flex-1 flex-col items-center border-l border-[#dadce0] bg-white">
          <div className="mt-[23px] flex h-[18px] w-[16px] items-center justify-center rounded-[2px] border-t-[3px] border-t-[#9cbcf0] bg-[#3f7fe0] text-[8.5px] text-white">31</div>
          <div className="mt-[46px] flex h-[18px] w-[17px] items-center justify-center rounded-[2px] bg-[#f5b82e]">
            <svg width="9" height="12" viewBox="0 0 12 16" className="block">
              <path d="M6 1a4.5 4.5 0 0 0-2.5 8.2V12h5V9.2A4.5 4.5 0 0 0 6 1zM4 13.5h4V15H4z" fill="none" stroke="#fff" strokeWidth="1.4" />
            </svg>
          </div>
          <div className="mt-[45px] flex h-[19px] w-[19px] items-center justify-center rounded-full bg-[#3b7fe6]">
            <svg width="12" height="10" viewBox="0 0 15 13" className="block">
              <path d="M5 6l3 3 6-8" stroke="#fff" strokeWidth="2.4" fill="none" />
              <path d="M2 8l3 3-4 1z" fill="#f5b82e" />
            </svg>
          </div>
          <div className="mb-[24px] mt-auto">
            <svg width="10" height="16" viewBox="0 0 10 16" className="block">
              <path d="M1.5 1.5L8 8l-6.5 6.5" stroke="#5f6368" strokeWidth="1.7" fill="none" />
            </svg>
          </div>
        </div>
      </div>
    </div>
  );
}
